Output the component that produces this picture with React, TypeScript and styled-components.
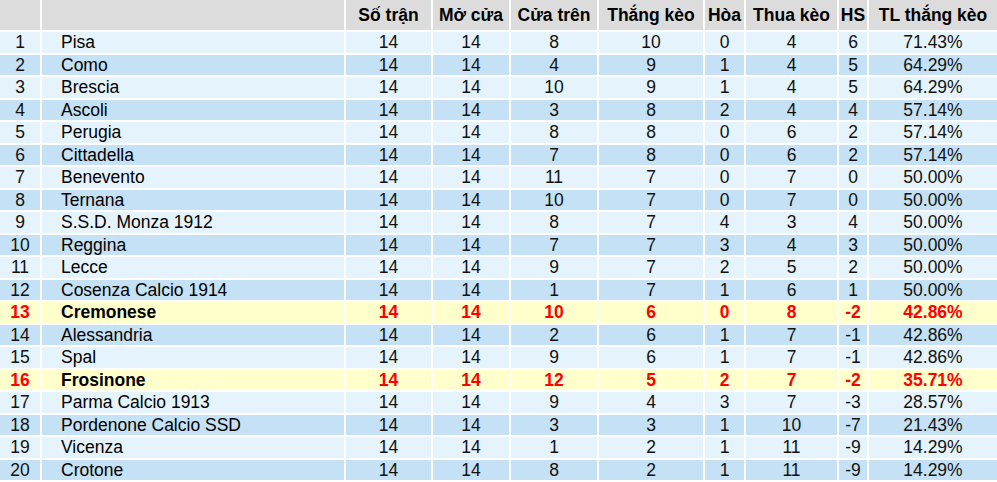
import React from 'react';
import styled, { createGlobalStyle } from 'styled-components';

type Team = [number, string, number, number, number, number, number, number, number, string, boolean?];

const teams: Team[] = [
  [1, 'Pisa', 14, 14, 8, 10, 0, 4, 6, '71.43%'],
  [2, 'Como', 14, 14, 4, 9, 1, 4, 5, '64.29%'],
  [3, 'Brescia', 14, 14, 10, 9, 1, 4, 5, '64.29%'],
  [4, 'Ascoli', 14, 14, 3, 8, 2, 4, 4, '57.14%'],
  [5, 'Perugia', 14, 14, 8, 8, 0, 6, 2, '57.14%'],
  [6, 'Cittadella', 14, 14, 7, 8, 0, 6, 2, '57.14%'],
  [7, 'Benevento', 14, 14, 11, 7, 0, 7, 0, '50.00%'],
  [8, 'Ternana', 14, 14, 10, 7, 0, 7, 0, '50.00%'],
  [9, 'S.S.D. Monza 1912', 14, 14, 8, 7, 4, 3, 4, '50.00%'],
  [10, 'Reggina', 14, 14, 7, 7, 3, 4, 3, '50.00%'],
  [11, 'Lecce', 14, 14, 9, 7, 2, 5, 2, '50.00%'],
  [12, 'Cosenza Calcio 1914', 14, 14, 1, 7, 1, 6, 1, '50.00%'],
  [13, 'Cremonese', 14, 14, 10, 6, 0, 8, -2, '42.86%', true],
  [14, 'Alessandria', 14, 14, 2, 6, 1, 7, -1, '42.86%'],
  [15, 'Spal', 14, 14, 9, 6, 1, 7, -1, '42.86%'],
  [16, 'Frosinone', 14, 14, 12, 5, 2, 7, -2, '35.71%', true],
  [17, 'Parma Calcio 1913', 14, 14, 9, 4, 3, 7, -3, '28.57%'],
  [18, 'Pordenone Calcio SSD', 14, 14, 3, 3, 1, 10, -7, '21.43%'],
  [19, 'Vicenza', 14, 14, 1, 2, 1, 11, -9, '14.29%'],
  [20, 'Crotone', 14, 14, 8, 2, 1, 11, -9, '14.29%'],
];

const headers = ['', '', 'Số trận', 'Mở cửa', 'Cửa trên', 'Thắng kèo', 'Hòa', 'Thua kèo', 'HS', 'TL thắng kèo'];

function App() {
  return (
    <>
      <GlobalStyle />
      <Table>
        <HeadRow>
          {headers.map((h, i) => (
            <HeadCell key={i}>{h}</HeadCell>
          ))}
        </HeadRow>
        {teams.map((t) => {
          const [rank, name, ...rest] = t;
          const hot = !!t[10];
          const tone = hot ? 'hot' : rank % 2 === 1 ? 'light' : 'dark';
          return (
            <Row key={rank} tone={tone}>
              <Cell hot={hot}>{rank}</Cell>
              <NameCell hot={hot}>{name}</NameCell>
              {rest.slice(0, 8).map((v, i) => (
                <Cell key={i} hot={hot}>{v as React.ReactNode}</Cell>
              ))}
            </Row>
          );
        })}
      </Table>
    </>
  );
}
export default App;

const GlobalStyle = createGlobalStyle`
  html, body {
    overflow: hidden;
  }
  body {
    margin: 0;
    background: #fff;
    font-family: "Liberation Sans", Arial, sans-serif;
    color: #111;
  }
`;

const Table = styled.div`
  display: flex;
  flex-direction: column;
  gap: 2px;
  width: 997px;
`;

const columns = '40px 302px 85px 76px 86px 104px 39px 91px 28px 128px';

const HeadRow = styled.div`
  display: grid;
  grid-template-columns: ${columns};
  column-gap: 2px;
  height: 30px;
`;

const HeadCell = styled.div`
  background: #dcdcdc;
  font-weight: bold;
  font-size: 17.5px;
  display: flex;
  align-items: center;
  justify-content: center;
  white-space: nowrap;
  color: #000;
`;

const tones: Record<string, string> = {
  light: '#e5f3fc',
  dark: '#c5e1f5',
  hot: '#ffffcc',
};

const Row = styled.div<{ tone: string }>`
  display: grid;
  grid-template-columns: ${columns};
  column-gap: 2px;
  height: 20.5px;
  line-height: 20px;
  & > div {
    background: ${props => tones[props.tone]};
  }
`;

const Cell = styled.div<{ hot?: boolean }>`
  display: flex;
  align-items: center;
  justify-content: center;
  font-size: 17.5px;
  white-space: nowrap;
  color: ${props => props.hot ? '#ff0000' : '#111'};
  font-weight: ${props => props.hot ? 'bold' : 'normal'};
`;

const NameCell = styled.div<{ hot?: boolean }>`
  display: flex;
  align-items: center;
  padding-left: 19px;
  font-size: 17.5px;
  white-space: nowrap;
  color: #000;
  font-weight: ${props => props.hot ? 'bold' : 'normal'};
`;
